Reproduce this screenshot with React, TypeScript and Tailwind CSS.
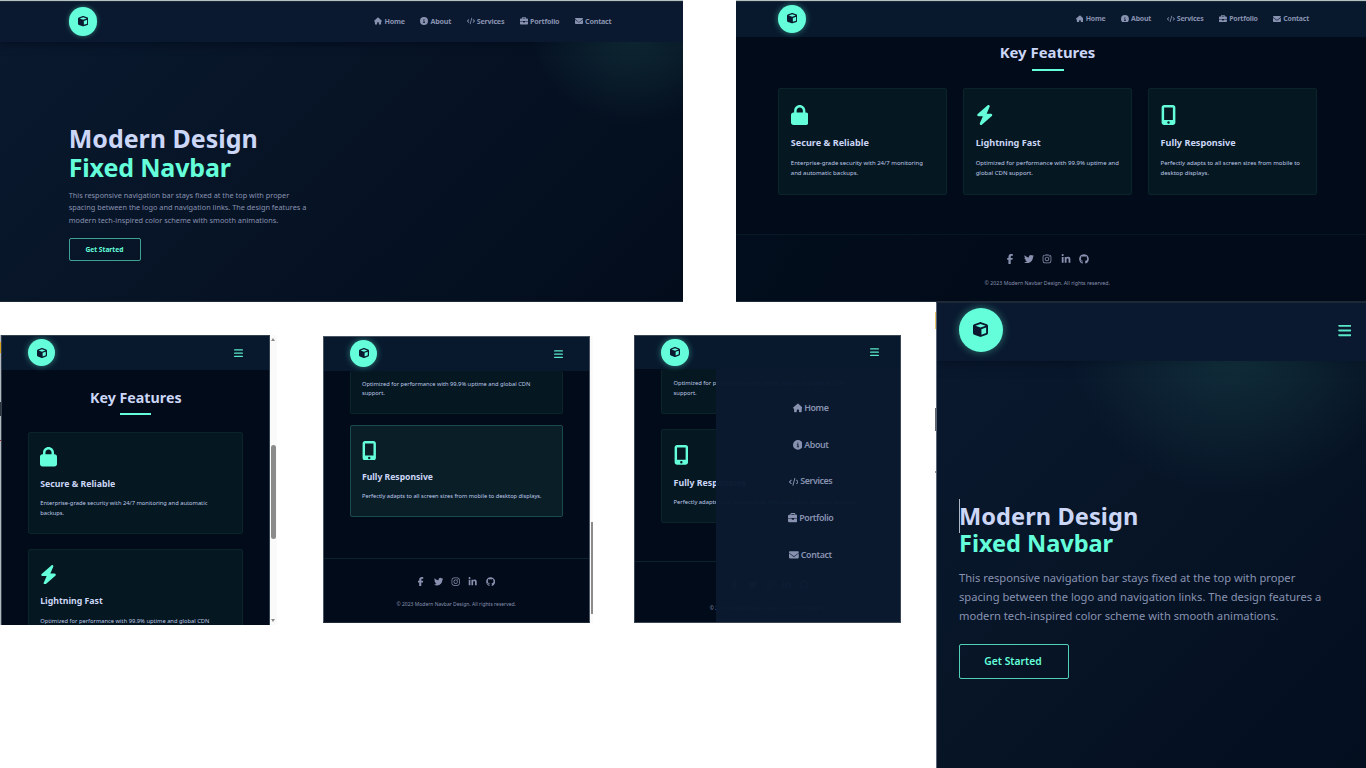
import React from 'react';
import {
  FaBars, FaBolt, FaBriefcase, FaCircleInfo, FaCode, FaCube, FaEnvelope, FaFacebookF, FaGithub,
  FaHouse, FaInstagram, FaLinkedinIn, FaLock, FaMobileScreenButton, FaTwitter,
} from 'react-icons/fa6';

const LINKS = [
  { label: 'Home', Icon: FaHouse },
  { label: 'About', Icon: FaCircleInfo },
  { label: 'Services', Icon: FaCode },
  { label: 'Portfolio', Icon: FaBriefcase },
  { label: 'Contact', Icon: FaEnvelope },
];

const SOCIALS = [FaFacebookF, FaTwitter, FaInstagram, FaLinkedinIn, FaGithub];

function Lines({ lines, className }: { lines: string[]; className: string }) {
  return (
    <div className={className}>
      {lines.map((line) => (
        <div key={line} className="whitespace-nowrap">{line}</div>
      ))}
    </div>
  );
}

function Logo({ className }: { className: string }) {
  return (
    <div className={`flex shrink-0 items-center justify-center rounded-full bg-[#64ffda] text-[#0a192f] ${className}`}>
      <FaCube />
    </div>
  );
}

function NavLinks({ className, itemClass, labelClass }: { className: string; itemClass: string; labelClass: string }) {
  return (
    <div className={`flex text-[#8892b0] ${className}`}>
      {LINKS.map(({ label, Icon }) => (
        <a key={label} className={`flex items-center whitespace-nowrap ${itemClass}`}>
          <Icon className="shrink-0" />
          <span className={labelClass}>{label}</span>
        </a>
      ))}
    </div>
  );
}

function Title({ className, barClass }: { className: string; barClass: string }) {
  return (
    <div className="flex flex-col items-center">
      <h2 className={`font-bold whitespace-nowrap text-[#ccd6f6] ${className}`}>Key Features</h2>
      <div className={`bg-[#64ffda] ${barClass}`} />
    </div>
  );
}

function Card({ Icon, title, lines, className, iconClass, titleClass, textClass }: {
  Icon: React.ComponentType<{ className?: string }>;
  title: string; lines: string[]; className: string; iconClass: string; titleClass: string; textClass: string;
}) {
  return (
    <div className={`border ${className}`}>
      <Icon className={`block text-[#64ffda] ${iconClass}`} />
      <h3 className={`font-bold whitespace-nowrap text-[#ccd6f6] ${titleClass}`}>{title}</h3>
      <Lines lines={lines} className={`text-[#bfc9e8] ${textClass}`} />
    </div>
  );
}

function Footer({ className, iconsClass, copyClass }: { className: string; iconsClass: string; copyClass: string }) {
  return (
    <footer className={`flex flex-col items-center border-t border-[#64ffda]/10 text-[#8892b0] ${className}`}>
      <div className={`flex items-center ${iconsClass}`}>
        {SOCIALS.map((Icon, i) => <Icon key={i} />)}
      </div>
      <div className={`whitespace-nowrap ${copyClass}`}>© 2023 Modern Navbar Design. All rights reserved.</div>
    </footer>
  );
}

const HERO_TEXT = [
  'This responsive navigation bar stays fixed at the top with proper',
  'spacing between the logo and navigation links. The design features a',
  'modern tech-inspired color scheme with smooth animations.',
];

const CARD = 'rounded-[2px] border-[#0a2429] bg-[#051720]';

function DesktopHero() {
  return (
    <section className="h-[302px] w-[683px] overflow-hidden border-t border-b border-t-[#b5c1c3] border-b-[#1d2936] bg-[linear-gradient(135deg,#0a192f_0%,#071426_45%,#020c1b_100%)]">
      <nav className="flex h-[40.5px] items-center justify-between border-t border-[#1a2936] bg-[#0a192f] pr-[71.5px] pl-[68.7px] shadow-[0_2px_8px_rgba(2,12,27,0.7)]">
        <Logo className="-mt-[0.6px] size-[28.6px] text-[10.4px] shadow-[0_0_5px_rgba(100,255,218,0.4)]" />
        <NavLinks className="-mt-[2px] gap-[15.7px]" itemClass="gap-[2px] text-[8px]" labelClass="text-[7.15px] leading-[10px] font-bold tracking-[-0.2px]" />
      </nav>
      <div className="h-[260px] bg-[radial-gradient(circle_at_635px_-24px,rgba(100,255,218,0.14)_0%,rgba(100,255,218,0.085)_30px,rgba(100,255,218,0)_108px)] pt-[82.9px] pl-[68.7px]">
        <h1 className="text-[25px] leading-[28.2px] font-bold text-[#ccd6f6]">
          Modern Design<br /><span className="tracking-[-0.15px] text-[#64ffda]">Fixed Navbar</span>
        </h1>
        <Lines lines={HERO_TEXT} className="mt-[8.2px] text-[7.33px] leading-[12.4px] text-[#8892b0]" />
        <button className="mt-[11.8px] flex h-[23px] w-[72.5px] items-center justify-center rounded-[2px] border border-[#64ffda]/60 pr-[1px] text-[6.65px] font-bold text-[#64ffda]">Get Started</button>
      </div>
    </section>
  );
}

function DesktopFeatures() {
  const card = `h-[107px] w-[169.2px] pt-[16px] pl-[11.8px] ${CARD}`;
  const title = 'mt-[12px] text-[9.1px] leading-[12px]';
  const text = 'mt-[9px] text-[6px] leading-[10px]';
  return (
    <section className="h-[302px] w-[630px] overflow-hidden border-t border-b border-t-[#b5c1c3] border-b-[#1d2936] bg-[#020b19]">
      <nav className="flex h-[35.5px] items-center justify-between border-t border-[#1a2936] bg-[#08192e] pr-[57px] pl-[42px]">
        <Logo className="-mt-[1.2px] size-[28.2px] text-[10.4px] shadow-[0_0_6px_rgba(100,255,218,0.45)]" />
        <NavLinks className="-mt-[1.4px] gap-[15.6px]" itemClass="gap-[2.2px] text-[7.9px]" labelClass="text-[6.95px] leading-[10px] font-bold tracking-[-0.2px]" />
      </nav>
      <div className="pt-[5.6px] pr-[7px]">
        <Title className="text-[14.9px] leading-[20px]" barClass="mt-[6.9px] h-[2px] w-[32px]" />
      </div>
      <div className="mt-[17px] flex gap-[15.7px] pl-[42px]">
        <Card Icon={FaLock} title="Secure & Reliable" lines={['Enterprise-grade security with 24/7 monitoring', 'and automatic backups.']} className={card} iconClass="h-[20px] w-[17.5px]" titleClass={title} textClass={text} />
        <Card Icon={FaBolt} title="Lightning Fast" lines={['Optimized for performance with 99.9% uptime and', 'global CDN support.']} className={card} iconClass="h-[20px] w-[17.5px]" titleClass={title} textClass={text} />
        <Card Icon={FaMobileScreenButton} title="Fully Responsive" lines={['Perfectly adapts to all screen sizes from mobile to', 'desktop displays.']} className={card} iconClass="h-[20px] w-[15px]" titleClass={title} textClass={text} />
      </div>
      <Footer
        className="mt-[39.4px] h-[67px] border-[#64ffda]/5! bg-[linear-gradient(120deg,#020e1d,#020b19_40%)] pt-[18.4px] pr-[7.6px]"
        iconsClass="gap-[8.4px] text-[10px]"
        copyClass="mt-[14px] text-[5.25px] leading-[10px]"
      />
    </section>
  );
}

function PhoneFeatures() {
  const card = `w-[215px] pt-[14.5px] pl-[11.2px] ${CARD}`;
  const title = 'mt-[10.8px] text-[8.75px] leading-[12px]';
  const text = 'mt-[9.8px] text-[5.75px] leading-[9.6px]';
  return (
    <section className="flex h-[290px]">
      <div className="flex w-[1px] flex-col bg-[#b4b8bf]">
        <div className="mt-[7px] h-[11px] bg-[#d8a21c]" />
        <div className="mt-[49px] h-[14px] bg-[#30353d]" />
        <div className="mt-[24px] h-px bg-[#a02b3c]" />
      </div>
      <div className="w-[268.5px] overflow-hidden border-t border-r border-l border-[#33414f] bg-[#020b19]">
        <nav className="flex h-[34px] items-center justify-between bg-[#08192e] pr-[26px] pl-[26px]">
          <Logo className="-mt-[0.6px] size-[27.2px] text-[10px] shadow-[0_0_6px_rgba(100,255,218,0.45)]" />
          <FaBars className="h-[10.4px] w-[9px] text-[#64ffda]/90" />
        </nav>
        <div className="pt-[18px] pl-[1px]">
          <Title className="text-[14.25px] leading-[20px]" barClass="mt-[5px] h-[1.8px] w-[31px]" />
        </div>
        <div className="mt-[17px] flex flex-col gap-[15px] pl-[26px]">
          <Card Icon={FaLock} title="Secure & Reliable" lines={['Enterprise-grade security with 24/7 monitoring and automatic', 'backups.']} className={`h-[102.5px] ${card}`} iconClass="h-[19.6px] w-[17px]" titleClass={title} textClass={text} />
          <Card Icon={FaBolt} title="Lightning Fast" lines={['Optimized for performance with 99.9% uptime and global CDN', 'support.']} className={`h-[102.5px] ${card}`} iconClass="h-[19.6px] w-[17px]" titleClass={title} textClass={text} />
        </div>
      </div>
      <div className="flex w-[7.5px] flex-col items-center justify-between bg-[#fafafa] py-[3px]">
        <svg viewBox="0 0 4 3" className="h-[3px] w-[4px]"><path d="M0 3L2 0L4 3Z" fill="#8a8a8a" /></svg>
        <div className="mt-[23px] h-[94px] w-[4.6px] rounded-full bg-[#8b8b8b]" />
        <svg viewBox="0 0 4 3" className="h-[3px] w-[4px]"><path d="M0 0L2 3L4 0Z" fill="#8a8a8a" /></svg>
      </div>
    </section>
  );
}

function PhoneFooter() {
  return (
    <section className="flex h-[287px]">
      <div className="w-[266.5px] overflow-hidden border border-[#4b5665] border-b-[#1d2936] bg-[#020b19]">
        <nav className="flex h-[33.5px] items-center justify-between bg-[#08192e] pr-[26px] pl-[26px]">
          <Logo className="-mt-[0.6px] size-[27px] text-[10px] shadow-[0_0_6px_rgba(100,255,218,0.45)]" />
          <FaBars className="h-[10.4px] w-[9px] text-[#64ffda]/90" />
        </nav>
        <div className="pl-[26px]">
          <div className={`h-[43.5px] w-[213px] border-x border-b pt-[9.4px] pl-[11px] ${CARD}`}>
            <Lines lines={['Optimized for performance with 99.9% uptime and global CDN', 'support.']} className="text-[5.73px] leading-[9.6px] text-[#bfc9e8]" />
          </div>
          <Card Icon={FaMobileScreenButton} title="Fully Responsive" lines={['Perfectly adapts to all screen sizes from mobile to desktop displays.']} className="mt-[11px] h-[92px] w-[213px] rounded-[2px] border-[#1b4a4d] bg-[#0a1e28] pt-[14.5px] pl-[11px]" iconClass="h-[19.5px] w-[14.5px]" titleClass="mt-[10.6px] text-[8.6px] leading-[12px]" textClass="mt-[9px] text-[5.7px] leading-[9.6px]" />
        </div>
        <Footer className="mt-[40.9px] h-[67px]" iconsClass="mt-[18.2px] gap-[8.1px] pr-[1.3px] text-[9.3px]" copyClass="mt-[12.4px] text-[5px] leading-[10px]" />
      </div>
      <div className="flex w-[3.5px] flex-col items-end bg-[#fafafa] pt-[186px]">
        <div className="h-[92px] w-[1.6px] bg-[#8b8b8b]" />
      </div>
    </section>
  );
}

function PhoneMenu() {
  return (
    <section className="relative h-[288px] w-[267px] overflow-hidden border border-[#3b4654] bg-[#020b19]">
      <nav className="flex h-[33px] items-center justify-between bg-[#08192e] pr-[21.5px] pl-[26.3px]">
        <Logo className="-mt-[0.6px] size-[27.4px] text-[10px] shadow-[0_0_6px_rgba(100,255,218,0.45)]" />
        <FaBars className="-mt-[0.6px] h-[10.4px] w-[9px] text-[#64ffda]/90" />
      </nav>
      <div className="pl-[26px]">
        <div className={`h-[44.5px] w-[215px] border-x border-b pt-[10px] pl-[11.6px] ${CARD}`}>
          <Lines lines={['Optimized for performance with 99.9% uptime and global CDN', 'support.']} className="text-[5.8px] leading-[9.7px] text-[#bfc9e8]" />
        </div>
        <Card Icon={FaMobileScreenButton} title="Fully Responsive" lines={['Perfectly adapts to all screen sizes from mobile to desktop displays.']} className={`mt-[15.5px] h-[93.5px] w-[215px] pt-[15px] pl-[11.6px] ${CARD}`} iconClass="h-[19.7px] w-[14.7px]" titleClass="mt-[12px] text-[8.8px] leading-[12px]" textClass="mt-[9px] text-[5.8px] leading-[9.6px]" />
      </div>
      <Footer className="mt-[38.5px] h-[67px] pl-[4px]" iconsClass="mt-[18px] gap-[8px] text-[9.3px]" copyClass="mt-[13.5px] text-[5px] leading-[10px]" />
      <aside className="absolute top-[33px] right-0 bottom-0 w-[184.5px] bg-[#0a192f]/98 pt-[30.9px] pl-[5.5px]">
        <NavLinks className="flex-col items-center gap-[20.8px]" itemClass="h-[16px] gap-[1.8px] text-[9.8px]" labelClass="text-[8.9px] leading-[16px] font-semibold tracking-[-0.4px]" />
      </aside>
    </section>
  );
}

function TabletHero() {
  return (
    <section className="flex h-[466px] w-[430px] overflow-hidden border-t border-l border-t-[#1d2936] border-l-[#5b6575] bg-[linear-gradient(135deg,#0a192f_0%,#071527_45%,#030e1f_100%)]">
      <div className="w-full">
        <nav className="flex h-[58.4px] items-center justify-between bg-[#0a192f] pr-[14.8px] pb-[4px] pl-[22px] shadow-[0_2px_10px_rgba(2,12,27,0.6)]">
          <Logo className="-mt-[0.6px] size-[43.8px] text-[15px] shadow-[0_0_8px_rgba(100,255,218,0.4)]" />
          <FaBars className="h-[15px] w-[13.5px] text-[#64ffda]/90" />
        </nav>
        <div className="h-[407px] bg-[radial-gradient(circle_at_298px_-36px,rgba(100,255,218,0.14)_0%,rgba(100,255,218,0.085)_50px,rgba(100,255,218,0)_172px)] pt-[141.3px] pl-[22px]">
          <h1 className="relative text-[23.6px] leading-[27.4px] font-bold tracking-[0.06px] text-[#ccd6f6]">
            <span className="absolute top-[-4px] left-0 h-[34px] w-px bg-[#aeb6c6]" />
            Modern Design<br /><span className="tracking-[-0.05px] text-[#64ffda]">Fixed Navbar</span>
          </h1>
          <Lines lines={HERO_TEXT} className="mt-[10.6px] text-[11.18px] leading-[19.1px] text-[#8892b0]" />
          <button className="mt-[18.6px] flex h-[35px] w-[109.5px] items-center justify-center rounded-[2px] border border-[#64ffda]/80 pr-[1.5px] text-[10.3px] font-semibold text-[#64ffda]">Get Started</button>
        </div>
      </div>
    </section>
  );
}

export default function App() {
  return (
    <div className="flex h-[768px] w-[1366px] flex-col overflow-hidden bg-white font-['Noto_Sans',sans-serif]">
      <div className="flex h-[302px] justify-between">
        <DesktopHero />
        <DesktopFeatures />
      </div>
      <div className="flex h-[466px] justify-between">
        <div className="flex items-start">
          <div className="mt-[33px]"><PhoneFeatures /></div>
          <div className="mt-[34px] ml-[46px]"><PhoneFooter /></div>
          <div className="mt-[33px] ml-[41px]"><PhoneMenu /></div>
        </div>
        <div className="flex">
          <div className="flex w-[1px] flex-col">
            <div className="mt-[10px] h-[17px] bg-[#ecc766]" />
            <div className="mt-[79px] h-[23px] bg-[#5f646c]" />
            <div className="mt-[40px] h-[2px] bg-[#9a9da3]" />
          </div>
          <TabletHero />
        </div>
      </div>
    </div>
  );
}
